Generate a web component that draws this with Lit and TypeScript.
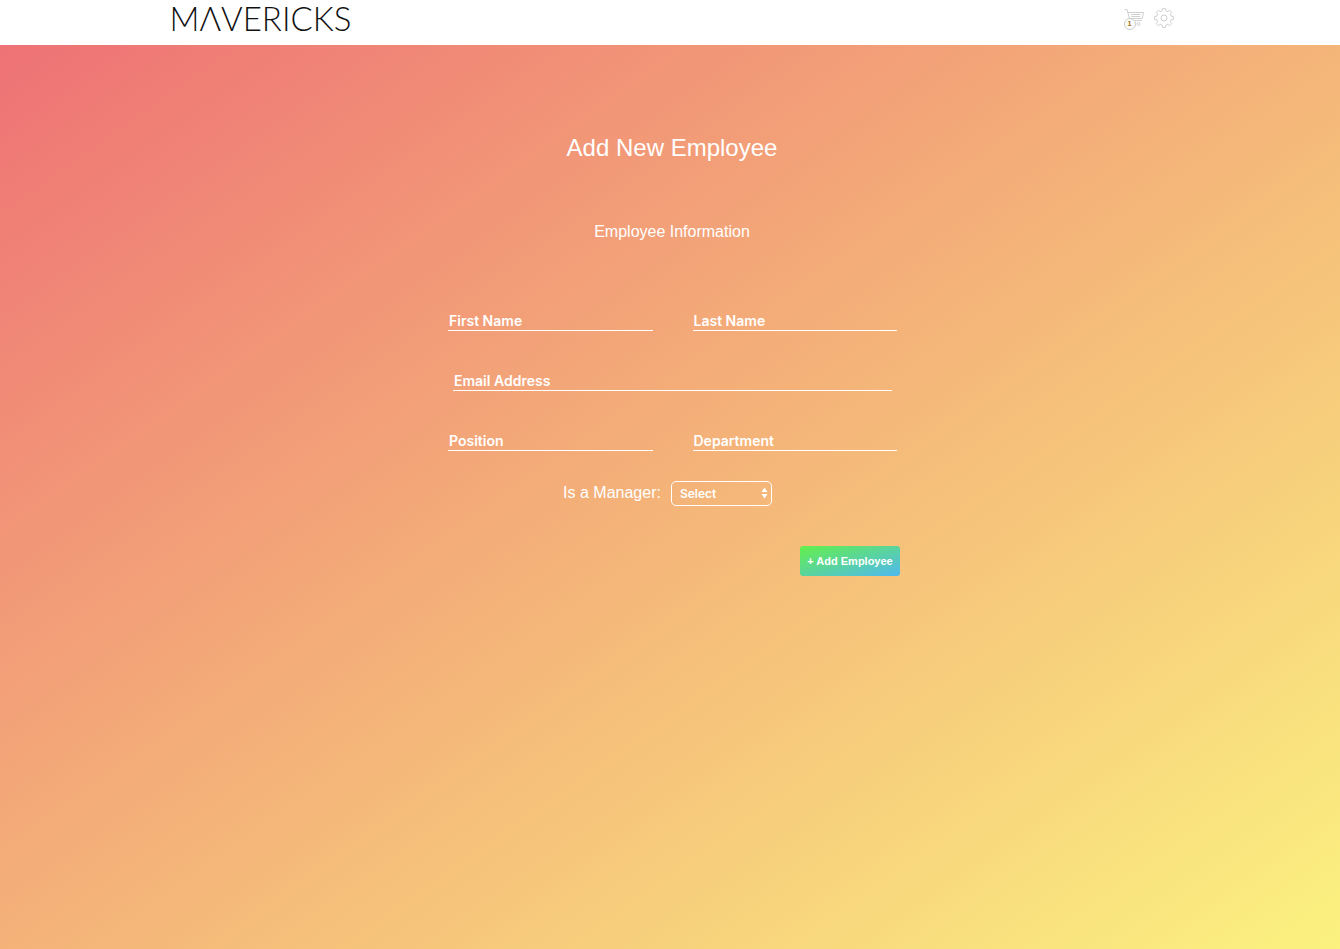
import { LitElement, html, css, svg } from "lit";
import { customElement } from "lit/decorators.js";

const gearPath = (() => {
  const points: string[] = [];
  const teeth = 8;
  const step = (Math.PI * 2) / teeth;
  for (let i = 0; i < teeth; i++) {
    const a = i * step - Math.PI / 2;
    const corners: [number, number][] = [
      [-0.24, 7.4],
      [-0.18, 9.5],
      [0.18, 9.5],
      [0.24, 7.4],
    ];
    for (const [offset, r] of corners) {
      points.push(`${(10 + r * Math.cos(a + offset)).toFixed(2)} ${(10 + r * Math.sin(a + offset)).toFixed(2)}`);
    }
  }
  return `M${points.join("L")}Z`;
})();

@customElement("app-header")
class AppHeader extends LitElement {
  static styles = css`
    :host {
      display: block;
      background: #fff;
    }
    .bar {
      display: flex;
      justify-content: space-between;
      align-items: flex-start;
      width: 75%;
      height: 45px;
      margin: 0 auto;
    }
    .logo {
      padding-left: 2px;
      color: #111;
      font: 300 33px/36px Lato, sans-serif;
      text-decoration: none;
    }
    .tools {
      display: flex;
      gap: 10px;
      padding-top: 8px;
      margin-right: -1px;
    }
    .tool {
      position: relative;
      display: block;
      width: 20px;
      height: 20px;
      padding: 0;
      border: 0;
      background: none;
    }
    .tool svg {
      display: block;
      fill: none;
      stroke: #d0d0d0;
    }
    .count {
      position: absolute;
      left: 0;
      top: 10px;
      box-sizing: border-box;
      width: 12px;
      height: 12px;
      border: 1px solid #ccc;
      border-radius: 50%;
      background: #fff;
      color: #b07a20;
      font: 700 8px/10px "Liberation Sans", sans-serif;
      text-align: center;
    }
  `;

  render() {
    return html`
      <header class="bar">
        <a class="logo" href="#">MΛVERICKS</a>
        <nav class="tools">
          <button class="tool" type="button" aria-label="Cart">
            <svg width="20" height="20" viewBox="0 0 20 20">
              ${svg`<path d="M0.5 1.5H3L6 12.5H18M3.6 4.5H19.5L18.2 10.5H5.4M7 6.5H16.5M7.5 8.5H16"/><circle cx="14.5" cy="16" r="1.5"/>`}
            </svg>
            <span class="count">1</span>
          </button>
          <button class="tool" type="button" aria-label="Settings">
            <svg width="20" height="20" viewBox="0 0 20 20">
              <path d=${gearPath} stroke-linejoin="round" />
              <circle cx="10" cy="10" r="3" />
            </svg>
          </button>
        </nav>
      </header>
    `;
  }
}

@customElement("app-root")
class AppRoot extends LitElement {
  static styles = css`
    :host {
      display: block;
      min-height: 100vh;
      background: linear-gradient(to bottom right, #ee6f75, #f4b279, #fbf280);
      font-family: "Liberation Sans", Arial, sans-serif;
      color: #fff;
    }
    .page {
      padding: 88px 16px 40px;
    }
    h1,
    h2 {
      margin: 0;
      padding-left: 4px;
      font-weight: 400;
      text-align: center;
    }
    h1 {
      font-size: 24px;
      line-height: 30px;
    }
    h2 {
      margin-top: 59px;
      font-size: 16px;
      line-height: 20px;
    }
    form {
      max-width: 456px;
      margin: 0 auto;
      padding: 69px 0 0 4px;
    }
    .fields {
      display: grid;
      grid-template-columns: 1fr 1fr;
      gap: 40px;
      padding: 0 3px 0 4px;
    }
    .field {
      display: grid;
      font: 600 14px/20px Inter, sans-serif;
    }
    .field label,
    .field input {
      grid-area: 1 / 1;
      padding: 0 1px;
    }
    .field label {
      z-index: 1;
      pointer-events: none;
    }
    .field:has(input:focus) label,
    .field:has(input:not(:placeholder-shown)) label {
      visibility: hidden;
    }
    .wide {
      grid-column: 1 / -1;
      margin: 0 5px;
    }
    input {
      box-sizing: border-box;
      width: 100%;
      height: 20px;
      border: 0;
      border-bottom: 1px solid #fff;
      border-radius: 0;
      background: none;
      color: #fff;
      font: inherit;
      outline: none;
    }
    .manager {
      display: flex;
      justify-content: center;
      align-items: flex-start;
      gap: 10px;
      padding: 30px 9px 0 0;
      font-size: 16px;
      line-height: 24px;
    }
    .picker {
      position: relative;
      display: block;
    }
    select {
      appearance: none;
      display: block;
      box-sizing: border-box;
      width: 101px;
      height: 25px;
      padding: 0 20px 0 8px;
      border: 1px solid #fff;
      border-radius: 5px;
      background: none;
      color: #fff;
      font: 600 12px/16px Inter, sans-serif;
    }
    .arrows {
      position: absolute;
      right: 4px;
      top: 6px;
      fill: #fff;
      pointer-events: none;
    }
    .actions {
      display: flex;
      justify-content: flex-end;
      padding-top: 40px;
    }
    .submit {
      width: 100px;
      height: 30px;
      padding: 0;
      border: 0;
      border-radius: 3px;
      background: linear-gradient(to bottom right, #64f04a, #50b8f0);
      color: #fff;
      font: 700 11px/14px "Liberation Sans", sans-serif;
      white-space: nowrap;
    }
  `;

  private field(id: string, label: string, type = "text", wide = false) {
    return html`<div class=${wide ? "field wide" : "field"}>
      <label for=${id}>${label}</label>
      <input id=${id} type=${type} placeholder=" " />
    </div>`;
  }

  render() {
    return html`
      <app-header></app-header>
      <main class="page">
        <h1>Add New Employee</h1>
        <h2>Employee Information</h2>
        <form>
          <div class="fields">
            ${this.field("first", "First Name")} ${this.field("last", "Last Name")}
            ${this.field("email", "Email Address", "email", true)}
            ${this.field("position", "Position")} ${this.field("department", "Department")}
          </div>
          <div class="manager">
            <label for="manager">Is a Manager:</label>
            <span class="picker">
              <select id="manager">
                <option>Select</option>
              </select>
              <svg class="arrows" width="7" height="12" viewBox="0 0 7 12">
                <path d="M3.5 0.5L6.5 5H0.5ZM3.5 11.5L6.5 7H0.5Z" />
              </svg>
            </span>
          </div>
          <div class="actions">
            <button class="submit" type="button">+ Add Employee</button>
          </div>
        </form>
      </main>
    `;
  }
}
